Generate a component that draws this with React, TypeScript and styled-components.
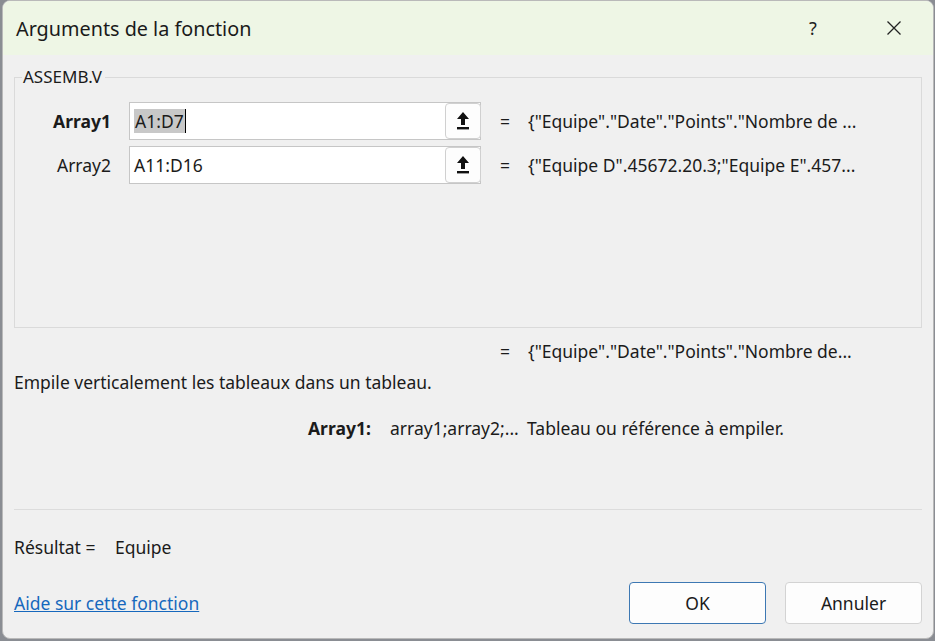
import React from 'react';
import styled, { createGlobalStyle } from 'styled-components';

const GlobalStyle = createGlobalStyle`
  html, body {
    margin: 0;
    padding: 0;
    background: #8a8d93;
    font-family: 'Segoe UI', 'Noto Sans', 'Open Sans', sans-serif;
    color: #1b1b1b;
  }
`;

const Dialog = styled.div`
  width: 930px;
  height: 637px;
  margin-left: 2px;
  background: #f0f0f0;
  border: 1px solid #b9b9b9;
  border-radius: 8px;
  overflow: hidden;
  display: flex;
  flex-direction: column;
`;

const TitleBar = styled.div`
  height: 54px;
  flex-shrink: 0;
  background: #eef6e5;
  display: flex;
  align-items: center;
  padding-left: 13px;
`;

const Title = styled.div`
  flex: 1;
  font-size: 19.8px;
  color: #1a1a1a;
`;

const TitleButton = styled.div<{ $w: number }>`
  width: ${(p) => p.$w}px;
  height: 54px;
  display: flex;
  align-items: center;
  justify-content: center;
  font-size: 18px;
  color: #222;
`;

const Body = styled.div`
  flex: 1;
  padding: 0 11px 0 11px;
  display: flex;
  flex-direction: column;
  font-size: 17.5px;
`;

const Group = styled.fieldset`
  margin: 12px 0 0 0;
  padding: 15px 0 0 0;
  height: 261px;
  box-sizing: border-box;
  border: 1px solid #dadada;
  border-radius: 0;
`;

const Legend = styled.legend`
  margin-left: 7px;
  padding: 0 3px 0 1px;
  font-size: 17px;
  line-height: 20px;
  color: #1b1b1b;
`;

const ArgRow = styled.div`
  display: flex;
  align-items: center;
  height: 38px;
  margin-bottom: 6px;
`;

const ArgLabel = styled.div<{ $bold?: boolean }>`
  width: 96px;
  text-align: right;
  font-weight: ${(p) => (p.$bold ? 700 : 400)};
  margin-right: 18px;
`;

const InputBox = styled.div`
  width: 352px;
  height: 38px;
  box-sizing: border-box;
  background: #fff;
  border: 1px solid #c6c6c6;
  display: flex;
  align-items: center;
  padding-left: 4px;
`;

const InputText = styled.div`
  flex: 1;
  display: flex;
  align-items: center;
`;

const Selected = styled.span`
  background: #c8c8c8;
  padding: 0 1px;
  line-height: 24px;
`;

const Caret = styled.span`
  display: inline-block;
  width: 1px;
  height: 24px;
  background: #000;
`;

const PickButton = styled.div`
  width: 36px;
  height: 36px;
  box-sizing: border-box;
  border: 1px solid #d0d0d0;
  border-radius: 4px;
  background: #fdfdfd;
  display: flex;
  align-items: center;
  justify-content: center;
  margin-right: -1px;
`;

const Equals = styled.div`
  width: 20px;
  margin-left: 19px;
`;

const Value = styled.div`
  margin-left: 8px;
  white-space: nowrap;
`;

const ResultLine = styled.div`
  display: flex;
  align-items: center;
  height: 24px;
  margin-top: 11px;
  padding-left: 467px;
`;

const Description = styled.div`
  margin-top: 7px;
`;

const ArgHelp = styled.div`
  display: flex;
  align-items: baseline;
  margin-top: 22px;
  padding-left: 294px;
`;

const HelpName = styled.span`
  font-weight: 700;
  width: 82px;
`;

const HelpSyntax = styled.span`
  width: 137px;
`;

const Separator = styled.div`
  height: 1px;
  background: #dcdcdc;
  margin-top: 69px;
`;

const ResultRow = styled.div`
  display: flex;
  margin-top: 25px;
`;

const ResultLabel = styled.span`
  width: 101px;
`;

const Footer = styled.div`
  display: flex;
  align-items: center;
  margin-top: 23px;
`;

const HelpLink = styled.a`
  flex: 1;
  color: #1668bd;
  text-decoration: underline;
  cursor: pointer;
`;

const Button = styled.button<{ $primary?: boolean }>`
  width: 137px;
  height: 42px;
  box-sizing: border-box;
  margin-left: 19px;
  border-radius: 4px;
  border: 1px solid ${(p) => (p.$primary ? '#3d78b3' : '#d3d3d3')};
  background: #fdfdfd;
  font-family: inherit;
  font-size: 17.5px;
  color: #1b1b1b;
  &:first-of-type {
    margin-left: 0;
  }
`;

const PickIcon = () => (
  <svg width="14" height="20" viewBox="0 0 14 20">
    <path d="M7 1 L13 8 L9 8 L9 14 L5 14 L5 8 L1 8 Z" fill="#111" />
    <rect x="1" y="16" width="12" height="2.4" fill="#111" />
  </svg>
);

const CloseIcon = () => (
  <svg width="16" height="16" viewBox="0 0 16 16">
    <path d="M1.5 1.5 L14.5 14.5 M14.5 1.5 L1.5 14.5" stroke="#222" strokeWidth="1.3" />
  </svg>
);

const args = [
  { name: 'Array1', ref: 'A1:D7', value: '{"Equipe"."Date"."Points"."Nombre de ...', active: true },
  { name: 'Array2', ref: 'A11:D16', value: '{"Equipe D".45672.20.3;"Equipe E".457...', active: false },
];

export default function App() {
  return (
    <>
      <GlobalStyle />
      <Dialog>
        <TitleBar>
          <Title>Arguments de la fonction</Title>
          <TitleButton $w={84}>?</TitleButton>
          <TitleButton $w={78}>
            <CloseIcon />
          </TitleButton>
        </TitleBar>
        <Body>
          <Group>
            <Legend>ASSEMB.V</Legend>
            {args.map((a) => (
              <ArgRow key={a.name}>
                <ArgLabel $bold={a.active}>{a.name}</ArgLabel>
                <InputBox>
                  <InputText>
                    {a.active ? (
                      <>
                        <Selected>{a.ref}</Selected>
                        <Caret />
                      </>
                    ) : (
                      a.ref
                    )}
                  </InputText>
                  <PickButton>
                    <PickIcon />
                  </PickButton>
                </InputBox>
                <Equals>=</Equals>
                <Value>{a.value}</Value>
              </ArgRow>
            ))}
          </Group>
          <ResultLine>
            <Equals>=</Equals>
            <Value>{'{"Equipe"."Date"."Points"."Nombre de...'}</Value>
          </ResultLine>
          <Description>Empile verticalement les tableaux dans un tableau.</Description>
          <ArgHelp>
            <HelpName>Array1:</HelpName>
            <HelpSyntax>array1;array2;...</HelpSyntax>
            <span>Tableau ou référence à empiler.</span>
          </ArgHelp>
          <Separator />
          <ResultRow>
            <ResultLabel>Résultat =</ResultLabel>
            <span>Equipe</span>
          </ResultRow>
          <Footer>
            <HelpLink>Aide sur cette fonction</HelpLink>
            <Button $primary>OK</Button>
            <Button>Annuler</Button>
          </Footer>
        </Body>
      </Dialog>
    </>
  );
}
